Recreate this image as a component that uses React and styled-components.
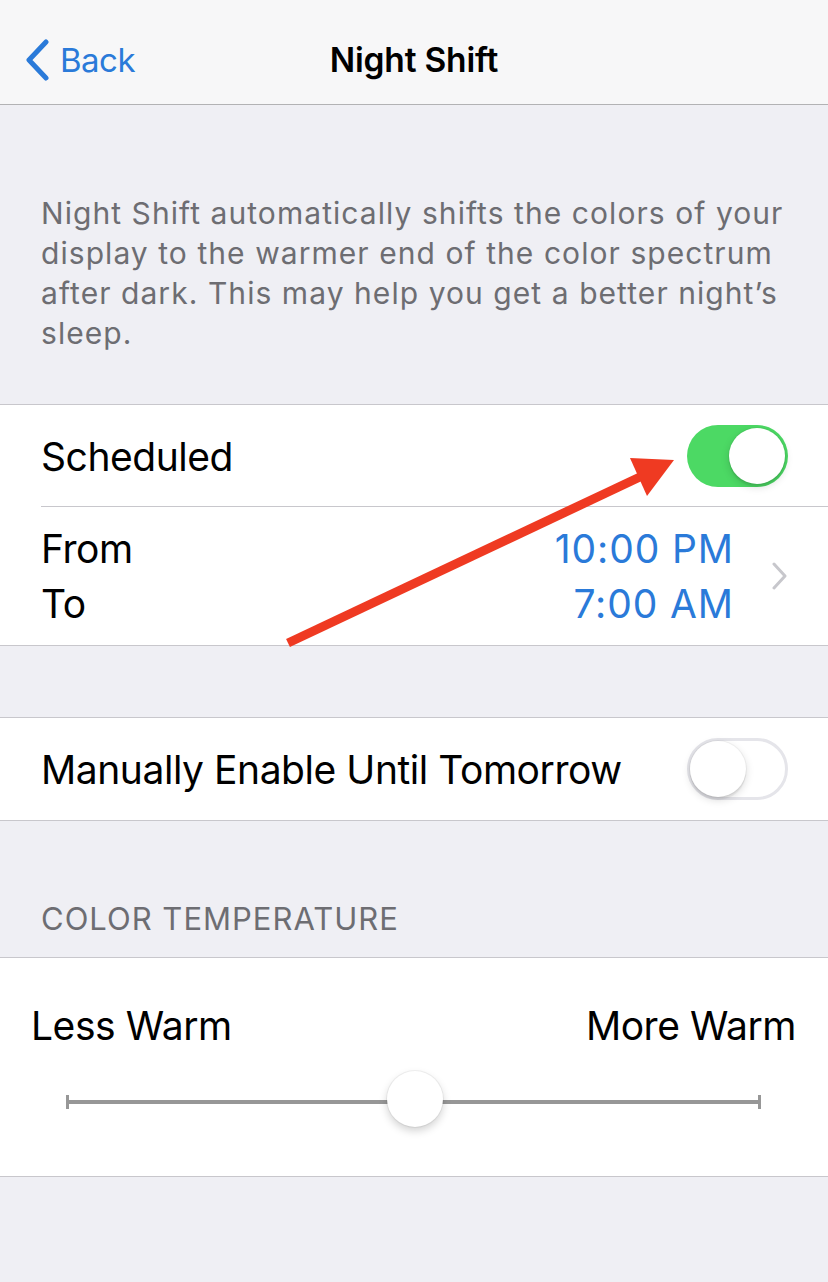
import React from "react";
import styled, { createGlobalStyle } from "styled-components";

const GlobalStyle = createGlobalStyle`
  html, body {
    margin: 0;
    padding: 0;
    background: #efeff4;
  }
  body {
    font-family: Inter, "Liberation Sans", sans-serif;
    -webkit-font-smoothing: antialiased;
  }
`;

const Screen = styled.div`
  position: relative;
  width: 828px;
  min-height: 1282px;
  background: #efeff4;
  overflow: hidden;
`;

const NavBar = styled.header`
  box-sizing: border-box;
  height: 105px;
  padding-top: 16px;
  background: #f7f7f8;
  border-bottom: 1px solid #b2b2b4;
  display: grid;
  grid-template-columns: 1fr auto 1fr;
  align-items: center;
`;

const BackButton = styled.div`
  display: flex;
  align-items: center;
  gap: 10px;
  padding-left: 24px;
  color: #2a7ad9;
  font-size: 33px;
  letter-spacing: -0.5px;
`;

const Title = styled.h1`
  margin: 0;
  font-size: 33.5px;
  font-weight: 600;
  color: #000;
  letter-spacing: -0.2px;
`;

const Footnote = styled.p`
  margin: 88px 0 51px;
  padding: 0 41px;
  font-size: 30px;
  line-height: 40px;
  color: #6d6d72;
  letter-spacing: 1.06px;
`;

const Group = styled.section`
  background: #fff;
  border-top: 1px solid #c8c7cc;
  border-bottom: 1px solid #c8c7cc;
  margin-bottom: ${(p) => p.$gap || 0}px;
`;

const Row = styled.div`
  position: relative;
  display: flex;
  align-items: center;
  justify-content: space-between;
  height: ${(p) => p.$h}px;
  padding: 0 40px 0 41px;
  ${(p) =>
    p.$divider &&
    `&::after {
      content: "";
      position: absolute;
      left: 41px;
      right: 0;
      bottom: 0;
      height: 1px;
      background: #c8c7cc;
    }`}
`;

const Label = styled.span`
  font-size: 39px;
  color: #000;
  letter-spacing: -0.45px;
  white-space: nowrap;
`;

const Stack = styled.div`
  display: flex;
  flex-direction: column;
  align-items: ${(p) => p.$align || "flex-start"};
`;

const StackLine = styled.span`
  font-size: 39px;
  line-height: 55px;
  letter-spacing: ${(p) => (p.$blue ? "0.9px" : "-0.4px")};
  color: ${(p) => (p.$blue ? "#2a7ad9" : "#000")};
`;

const Values = styled.div`
  display: flex;
  align-items: center;
  gap: 38px;
`;

const Switch = styled.div`
  position: relative;
  width: 101px;
  height: 62px;
  border-radius: 31px;
  box-sizing: border-box;
  background: ${(p) => (p.$on ? "#4cd964" : "#fff")};
  border: ${(p) => (p.$on ? "none" : "3px solid #e5e5ea")};
  flex-shrink: 0;
`;

const Knob = styled.div`
  position: absolute;
  top: ${(p) => (p.$on ? 3 : 0)}px;
  ${(p) => (p.$on ? "right: 3px;" : "left: 0;")}
  width: 56px;
  height: 56px;
  border-radius: 50%;
  background: #fff;
  box-shadow: 0 3px 8px rgba(0, 0, 0, 0.15), 0 3px 1px rgba(0, 0, 0, 0.06),
    0 0 0 1px rgba(0, 0, 0, 0.04);
`;

const SectionHeader = styled.h2`
  margin: 0;
  padding: 82px 41px 22px;
  font-size: 31px;
  font-weight: 400;
  line-height: 32px;
  color: #6d6d72;
  letter-spacing: 1px;
`;

const SliderCell = styled.div`
  box-sizing: border-box;
  height: 218px;
  padding: 0 32px 0 31px;
  display: flex;
  flex-direction: column;
`;

const SliderLabels = styled.div`
  display: flex;
  justify-content: space-between;
  align-items: center;
  height: 44px;
  margin-top: 45px;
`;

const Track = styled.div`
  position: relative;
  margin: 48px 35px 0 35px;
  height: 14px;
  display: flex;
  align-items: center;
`;

const TrackLine = styled.div`
  flex: 1;
  height: 4px;
  background: #979797;
`;

const TrackCap = styled.div`
  width: 3px;
  height: 14px;
  background: #979797;
`;

const Thumb = styled.div`
  position: absolute;
  left: ${(p) => p.$pos}%;
  top: 50%;
  width: 56px;
  height: 56px;
  margin: -31px 0 0 -28px;
  border-radius: 50%;
  background: #fff;
  box-shadow: 0 4px 8px rgba(0, 0, 0, 0.18), 0 0 0 1px rgba(0, 0, 0, 0.05);
`;

const Overlay = styled.svg`
  position: absolute;
  top: 0;
  left: 0;
  pointer-events: none;
`;

function BackChevron() {
  return (
    <svg width="26" height="42" viewBox="0 0 26 42">
      <path
        d="M22 3 L5 21 L22 39"
        fill="none"
        stroke="#2a7ad9"
        strokeWidth="5"
        strokeLinecap="round"
        strokeLinejoin="round"
      />
    </svg>
  );
}

function DisclosureChevron() {
  return (
    <svg width="16" height="28" viewBox="0 0 16 28">
      <path
        d="M2 2 L13 14 L2 26"
        fill="none"
        stroke="#c7c7cc"
        strokeWidth="3"
        strokeLinecap="round"
        strokeLinejoin="round"
      />
    </svg>
  );
}

function Toggle({ on }) {
  return (
    <Switch $on={on}>
      <Knob $on={on} />
    </Switch>
  );
}

export default function App() {
  return (
    <>
      <GlobalStyle />
      <Screen>
        <NavBar>
          <BackButton>
            <BackChevron />
            Back
          </BackButton>
          <Title>Night Shift</Title>
          <div />
        </NavBar>

        <Footnote>
          Night Shift automatically shifts the colors of your display to the
          warmer end of the color spectrum after dark. This may help you get a
          better night’s sleep.
        </Footnote>

        <Group $gap={71}>
          <Row $h={102} $divider>
            <Label>Scheduled</Label>
            <Toggle on />
          </Row>
          <Row $h={138}>
            <Stack>
              <StackLine>From</StackLine>
              <StackLine>To</StackLine>
            </Stack>
            <Values>
              <Stack $align="flex-end">
                <StackLine $blue>10:00 PM</StackLine>
                <StackLine $blue>7:00 AM</StackLine>
              </Stack>
              <DisclosureChevron />
            </Values>
          </Row>
        </Group>

        <Group>
          <Row $h={102}>
            <Label>Manually Enable Until Tomorrow</Label>
            <Toggle />
          </Row>
        </Group>

        <SectionHeader>COLOR TEMPERATURE</SectionHeader>

        <Group>
          <SliderCell>
            <SliderLabels>
              <Label>Less Warm</Label>
              <Label>More Warm</Label>
            </SliderLabels>
            <Track>
              <TrackCap />
              <TrackLine />
              <TrackCap />
              <Thumb $pos={50.2} />
            </Track>
          </SliderCell>
        </Group>

        {/* annotation arrow pointing at the schedule switch */}
        <Overlay width="828" height="1282" viewBox="0 0 828 1282">
          <line
            x1="288"
            y1="643"
            x2="642"
            y2="476"
            stroke="#ef3a22"
            strokeWidth="9"
          />
          <polygon points="674,460 630,458 647,496" fill="#ef3a22" />
        </Overlay>
      </Screen>
    </>
  );
}
